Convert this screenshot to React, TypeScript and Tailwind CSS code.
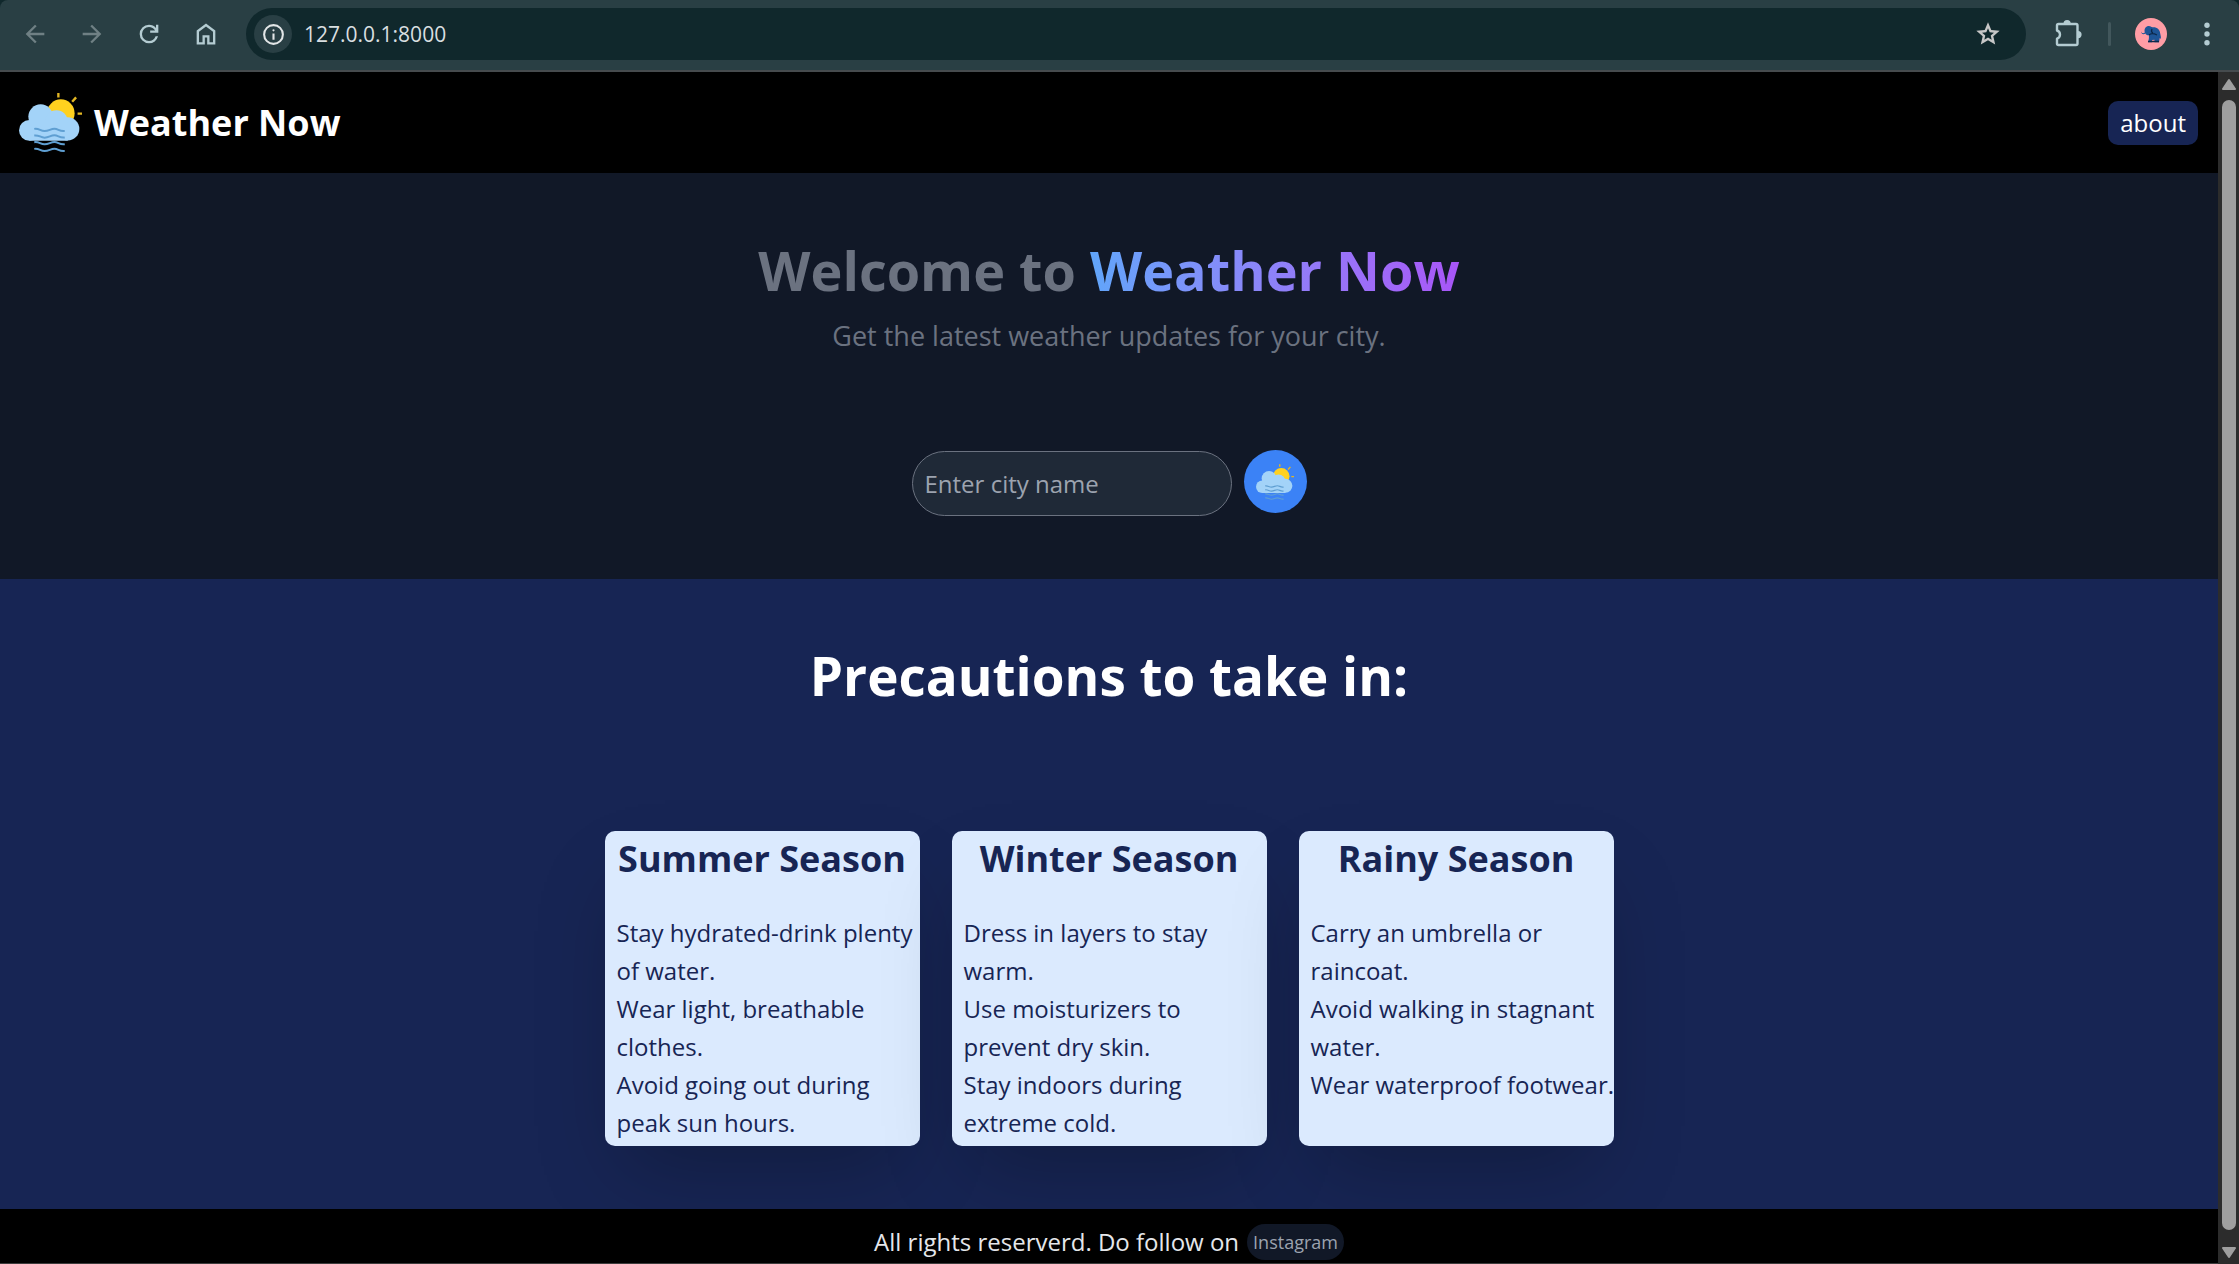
import React from "react";

function WeatherLogo({ className }: { className: string }) {
  return (
    <svg viewBox="0 0 64 64" className={className} aria-hidden="true">
      <path d="M40 2v4.500M58 6.500l-4 4.500M59.500 23h4.500" stroke="#e2b623" strokeWidth="2.4" />
      <circle cx="42.500" cy="22.500" r="14" fill="#ffd11f" />
      <g fill="#a3d3f8">
        <circle cx="10.500" cy="40" r="10.500" />
        <circle cx="22" cy="26" r="12.500" />
        <circle cx="38" cy="31" r="11.500" />
        <circle cx="49.500" cy="38.500" r="11.800" />
        <path d="M10.500 32h39v18.500h-39z" />
      </g>
      <g fill="none" stroke="#5f9fd2" strokeWidth="2">
        <path d="M15.500 38.500c5-.8 6 2.200 10.500 2.200s6-2.400 10-2.400 5 3 10.500 2.200" />
        <path d="M15.500 45.200c5-.8 6 2.200 10.500 2.200s6-2.400 10-2.400 5 3 10.500 2.200" />
        <path d="M15.500 52c5-.8 6 2.200 10.500 2.200s6-2.400 10-2.400 5 3 10.500 2.200" />
        <path d="M15.500 58.800c5-.8 6 2.200 10.500 2.200s6-2.400 10-2.400 5 3 10.500 2.200" />
      </g>
    </svg>
  );
}

function Glyph({ d, className }: { d: string; className: string }) {
  return (
    <svg viewBox="0 0 24 24" className={className} fill="currentColor" aria-hidden="true">
      <path d={d} />
    </svg>
  );
}

const icons = {
  back: "M20 11H7.830l5.590-5.590L12 4l-8 8 8 8 1.410-1.410L7.830 13H20v-2z",
  forward: "M4 11h12.170l-5.590-5.590L12 4l8 8-8 8-1.410-1.410L16.170 13H4v-2z",
  reload:
    "M12 20q-3.350 0-5.675-2.325T4 12t2.325-5.675T12 4q1.725 0 3.300.7125T18 6.750V4h2v7h-7V9h4.200q-.8-1.400-2.1875-2.200T12 6Q9.500 6 7.750 7.750T6 12t1.750 4.250T12 18q1.925 0 3.475-1.100T17.650 14h2.100q-.7 2.650-2.850 4.325T12 20Z",
  home: "M6 19h3v-6h6v6h3v-9l-6-4.500L6 10v9Zm-2 2V9l8-6 8 6v12h-7v-6h-2v6H4Z",
  info: "M11 17h2v-6h-2v6Zm1-8q.425 0 .7125-.2875T13 8t-.2875-.7125T12 7t-.7125.2875T11 8t.2875.7125T12 9Zm0 13q-4.150 0-7.075-2.925T2 12t2.925-7.075T12 2t7.075 2.925T22 12t-2.925 7.075T12 22Zm0-2q3.350 0 5.675-2.325T20 12t-2.325-5.675T12 4 6.325 6.325 4 12t2.325 5.675T12 20Z",
  star: "m8.850 16.825 3.150-1.900 3.150 1.925-.825-3.600 2.775-2.400-3.650-.325L12 7.125l-1.450 3.375-3.650.325 2.775 2.425-.825 3.575ZM5.825 21l1.625-7.025L2 9.250l7.200-.625L12 2l2.800 6.625 7.200.625-5.450 4.725L18.175 21 12 17.275 5.825 21Z",
};

function BrowserBar() {
  const nav = "flex size-10 items-center justify-center";
  return (
    <div className="bg-[#10282c]">
      <div className="flex h-18 items-center rounded-t-lg border-b-2 border-[#464b4e] bg-[#293f44] pr-4 pb-0.5 pl-[15px]">
        <div className="flex gap-[17px] pr-5">
          <button aria-label="Back" className={nav + " text-[#6f8084]"}>
            <Glyph d={icons.back} className="size-7" />
          </button>
          <button aria-label="Forward" className={nav + " text-[#6f8084]"}>
            <Glyph d={icons.forward} className="size-7" />
          </button>
          <button aria-label="Reload" className={nav + " text-[#b4ccd2]"}>
            <Glyph d={icons.reload} className="size-7" />
          </button>
          <button aria-label="Home" className={nav + " text-[#b4ccd2]"}>
            <Glyph d={icons.home} className="size-7" />
          </button>
        </div>
        <div className="flex h-13 flex-1 items-center gap-3 rounded-full bg-[#10282c] px-2">
          <button
            aria-label="Site information"
            className="flex size-[38px] items-center justify-center rounded-full bg-[#293f44] text-[#e3e6e7]"
          >
            <Glyph d={icons.info} className="size-[25px]" />
          </button>
          <input
            aria-label="Address"
            defaultValue="127.0.0.1:8000"
            className="min-w-0 flex-1 bg-transparent text-[21px] text-[#d9dfe0] outline-none"
          />
          <button aria-label="Bookmark this page" className="mr-4 text-[#c7c7c7]">
            <Glyph d={icons.star} className="size-7" />
          </button>
        </div>
        <button aria-label="Extensions" className="ml-6 text-[#b4ccd2]">
          <svg viewBox="0 0 36 36" className="size-9" fill="none" aria-hidden="true">
            <path
              d="M7 9.500a1.500 1.500 0 0 1 1.500-1.500H26a1.500 1.500 0 0 1 1.500 1.500v18a1.500 1.500 0 0 1-1.500 1.500H8.500A1.500 1.500 0 0 1 7 27.500v-4.800c4-1.200 4-7 0-8.200z"
              stroke="currentColor"
              strokeWidth="2.4"
              strokeLinejoin="round"
            />
            <path d="M13.500 7.500a3.600 3.600 0 0 1 7.200 0zM28 15a3.600 3.600 0 0 1 0 7.200z" fill="currentColor" />
          </svg>
        </button>
        <div className="ml-[22px] h-6 w-[3px] rounded-full bg-[#42575c]" />
        <button aria-label="Profile" className="ml-6 overflow-hidden rounded-full">
          <svg viewBox="0 0 32 32" className="size-8" aria-hidden="true">
            <rect width="32" height="32" fill="#ff9da5" />
            <path
              d="M6 13.200c.3 2 2.500 2.600 3.800 1.200C8.800 10.500 11 8 14 8c1.500 0 2 1 3.500 1.200 4.500-.4 7.500 2.300 7.700 6.300.3 2 1.300 4 .3 5.500l-.8-1-.7 4.200h-4.500v-2.500l-2.500.3v2.200h-3.800c.6-3 1-4.500.6-7-2 0-3-.8-3.300-1.800C8 17.200 6 15.500 6 13.200z"
              fill="#1e5596"
            />
            <path d="M14 17c2-2 6-1 8 0M17 11c-1 2-1 3 1 4" stroke="#0c2748" strokeWidth="1.200" fill="none" />
            <path d="M13 23.500h11" stroke="#0c2748" strokeWidth="1.500" />
          </svg>
        </button>
        <button aria-label="Browser menu" className="ml-6 text-[#b4ccd2]">
          <svg viewBox="0 0 32 32" className="size-8" fill="currentColor" aria-hidden="true">
            <circle cx="16" cy="7.300" r="2.700" />
            <circle cx="16" cy="16" r="2.700" />
            <circle cx="16" cy="24.700" r="2.700" />
          </svg>
        </button>
      </div>
    </div>
  );
}

function ScrollRail() {
  return (
    <div className="flex w-[21px] flex-col items-center bg-[#2c2c2c] py-1" aria-hidden="true">
      <svg viewBox="0 0 14 20" className="h-5 w-3.5">
        <path d="M7 4l6 9H1z" fill="#9f9f9f" stroke="#9f9f9f" strokeWidth="2" strokeLinejoin="round" />
      </svg>
      <div className="mt-1 mb-4 w-3.5 flex-1 rounded-full bg-[#9f9f9f]" />
      <svg viewBox="0 0 14 14" className="h-3.5 w-3.5">
        <path d="M7 11l6-9H1z" fill="#9f9f9f" stroke="#9f9f9f" strokeWidth="2" strokeLinejoin="round" />
      </svg>
    </div>
  );
}

const seasons = [
  {
    title: "Summer Season",
    tips: [
      "Stay hydrated-drink plenty of water.",
      "Wear light, breathable clothes.",
      "Avoid going out during peak sun hours.",
    ],
  },
  {
    title: "Winter Season",
    tips: [
      "Dress in layers to stay warm.",
      "Use moisturizers to prevent dry skin.",
      "Stay indoors during extreme cold.",
    ],
  },
  {
    title: "Rainy Season",
    tips: [
      "Carry an umbrella or raincoat.",
      "Avoid walking in stagnant water.",
      "Wear waterproof footwear.",
    ],
  },
];

export default function App() {
  return (
    <div className="flex min-h-screen flex-col bg-black font-['Open_Sans','Noto_Sans',sans-serif] text-2xl">
      <BrowserBar />
      <div className="flex flex-1">
        <div className="flex min-w-0 flex-1 flex-col">
          <header className="flex items-center justify-between bg-black py-[19px] pr-5 pl-[19px] text-white">
            <div className="flex items-center gap-3">
              <WeatherLogo className="size-[63px]" />
              <span className="text-4xl leading-[44px] font-bold">Weather Now</span>
            </div>
            <a href="#about" className="rounded-[10px] bg-[#172554] px-3 py-1.5">
              about
            </a>
          </header>

          <main>
            <section className="flex flex-col items-center bg-[#111827] pt-[63px] pb-[63px] text-[#6b7280]">
              <h1 className="text-[54px] leading-[68px] font-bold">
                Welcome to{" "}
                <span className="bg-gradient-to-r from-[#60a5fa] to-[#a855f7] bg-clip-text text-transparent">
                  Weather Now
                </span>
              </h1>
              <p className="mt-2.5 text-[27px] leading-[44px]">Get the latest weather updates for your city.</p>
              <form className="mt-[92px] flex items-start gap-3" onSubmit={(e) => e.preventDefault()}>
                <input
                  aria-label="City name"
                  placeholder="Enter city name"
                  className="mt-px h-[65px] w-80 rounded-full border border-[#6b7280] bg-[#1f2937] px-3 outline-none placeholder:text-[#9ca3af]"
                />
                <button
                  aria-label="Get weather"
                  className="flex size-[63px] items-center justify-center rounded-full bg-[#3b82f6]"
                >
                  <WeatherLogo className="size-[38px]" />
                </button>
              </form>
            </section>

            <section className="flex flex-col items-center bg-[#172554] pt-[63px] pb-[63px]">
              <h2 className="text-[53px] leading-[68px] font-bold text-white">Precautions to take in:</h2>
              <div className="mt-[121px] flex justify-center gap-8">
                {seasons.map((season) => (
                  <article
                    key={season.title}
                    className="h-[315px] w-[315px] rounded-[10px] bg-[#dbeafe] text-[#172554] shadow-[0_40px_80px_-20px_rgba(0,0,0,0.25)]"
                  >
                    <h3 className="text-center text-4xl leading-[56px] font-bold">{season.title}</h3>
                    <ul className="-mr-0.5 mt-[27px] pl-3 leading-[38px]">
                      {season.tips.map((tip) => (
                        <li key={tip}>{tip}</li>
                      ))}
                    </ul>
                  </article>
                ))}
              </div>
            </section>
          </main>

          <footer className="flex flex-1 items-center justify-center gap-2 border-b border-[#3c3c3c] bg-black pt-3 text-[#e5e7eb]">
            <span>All rights reserverd. Do follow on</span>
            <a href="#instagram" className="rounded-full bg-[#111827] px-1.5 py-1 text-lg text-[#9ca3af]">
              Instagram
            </a>
          </footer>
        </div>
        <ScrollRail />
      </div>
    </div>
  );
}
